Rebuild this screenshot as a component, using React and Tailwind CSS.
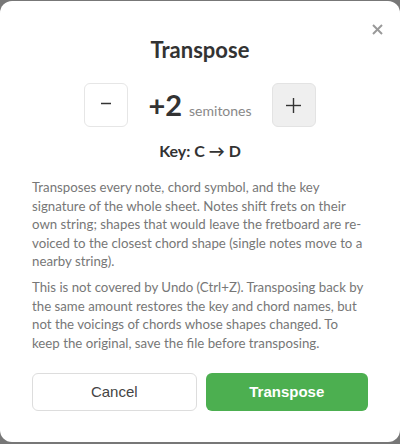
export default function App() {
  return (
    <div className="w-[400px] h-[444px] bg-[#777777] pt-px">
      <div
        className="relative w-[400px] h-[441px] bg-white rounded-[12px] pt-[35px] px-8 text-[#333333]"
        style={{ fontFamily: 'Lato, "Noto Sans", sans-serif' }}
      >
        <button className="absolute right-[16px] top-[21px] w-[14px] h-[14px] flex items-center justify-center text-[#999999]">
          <svg width="11" height="11" viewBox="0 0 11 11" stroke="currentColor" strokeWidth="2" strokeLinecap="butt">
            <line x1="1" y1="1" x2="10" y2="10" />
            <line x1="10" y1="1" x2="1" y2="10" />
          </svg>
        </button>

        <h2 className="text-center text-[22px] leading-[28px] font-bold">Transpose</h2>

        <div className="mt-[19px] flex items-center justify-center gap-5">
          <button className="w-11 h-11 rounded-[6px] border border-[#e6e6e6] bg-white flex items-center justify-center text-[#333333]">
            <svg width="10" height="10" viewBox="0 0 10 10" stroke="currentColor" strokeWidth="1.5">
              <line x1="0" y1="3.5" x2="10" y2="3.5" />
            </svg>
          </button>
          <div className="flex items-baseline">
            <span className="text-[29px] leading-none font-bold">+2</span>
            <span className="ml-[7px] text-[14px] text-[#888888]">semitones</span>
          </div>
          <button className="w-11 h-11 rounded-[6px] border border-[#e3e3e3] bg-[#efefef] flex items-center justify-center text-[#333333]">
            <svg width="15" height="15" viewBox="0 0 15 15" stroke="currentColor" strokeWidth="1.4">
              <line x1="0" y1="7.5" x2="15" y2="7.5" />
              <line x1="7.5" y1="0" x2="7.5" y2="15" />
            </svg>
          </button>
        </div>

        <div className="mt-[13px] text-center text-[16px] leading-[22px] font-bold">Key: C → D</div>

        <div className="mt-[16px] max-w-[332px] text-[13.25px] leading-[18.5px] text-[#777777]">
          <p>
            Transposes every note, chord symbol, and the key signature of the whole sheet. Notes shift frets on
            their own string; shapes that would leave the fretboard are re-voiced to the closest chord shape
            (single notes move to a nearby string).
          </p>
          <p className="mt-[7.5px]">
            This is not covered by Undo (Ctrl+Z). Transposing back by the same amount restores the key and chord
            names, but not the voicings of chords whose shapes changed. To keep the original, save the file
            before transposing.
          </p>
        </div>

        <div className="mt-[21px] flex gap-[9px]" style={{ fontFamily: '"Liberation Sans", Arial, sans-serif' }}>
          <button className="flex-1 h-[38px] rounded-[6px] border border-[#dddddd] bg-white text-[15px] text-[#444444]">
            Cancel
          </button>
          <button className="flex-1 h-[38px] rounded-[6px] bg-[#4caf50] text-[15px] font-bold text-white">
            Transpose
          </button>
        </div>
      </div>
    </div>
  );
}
